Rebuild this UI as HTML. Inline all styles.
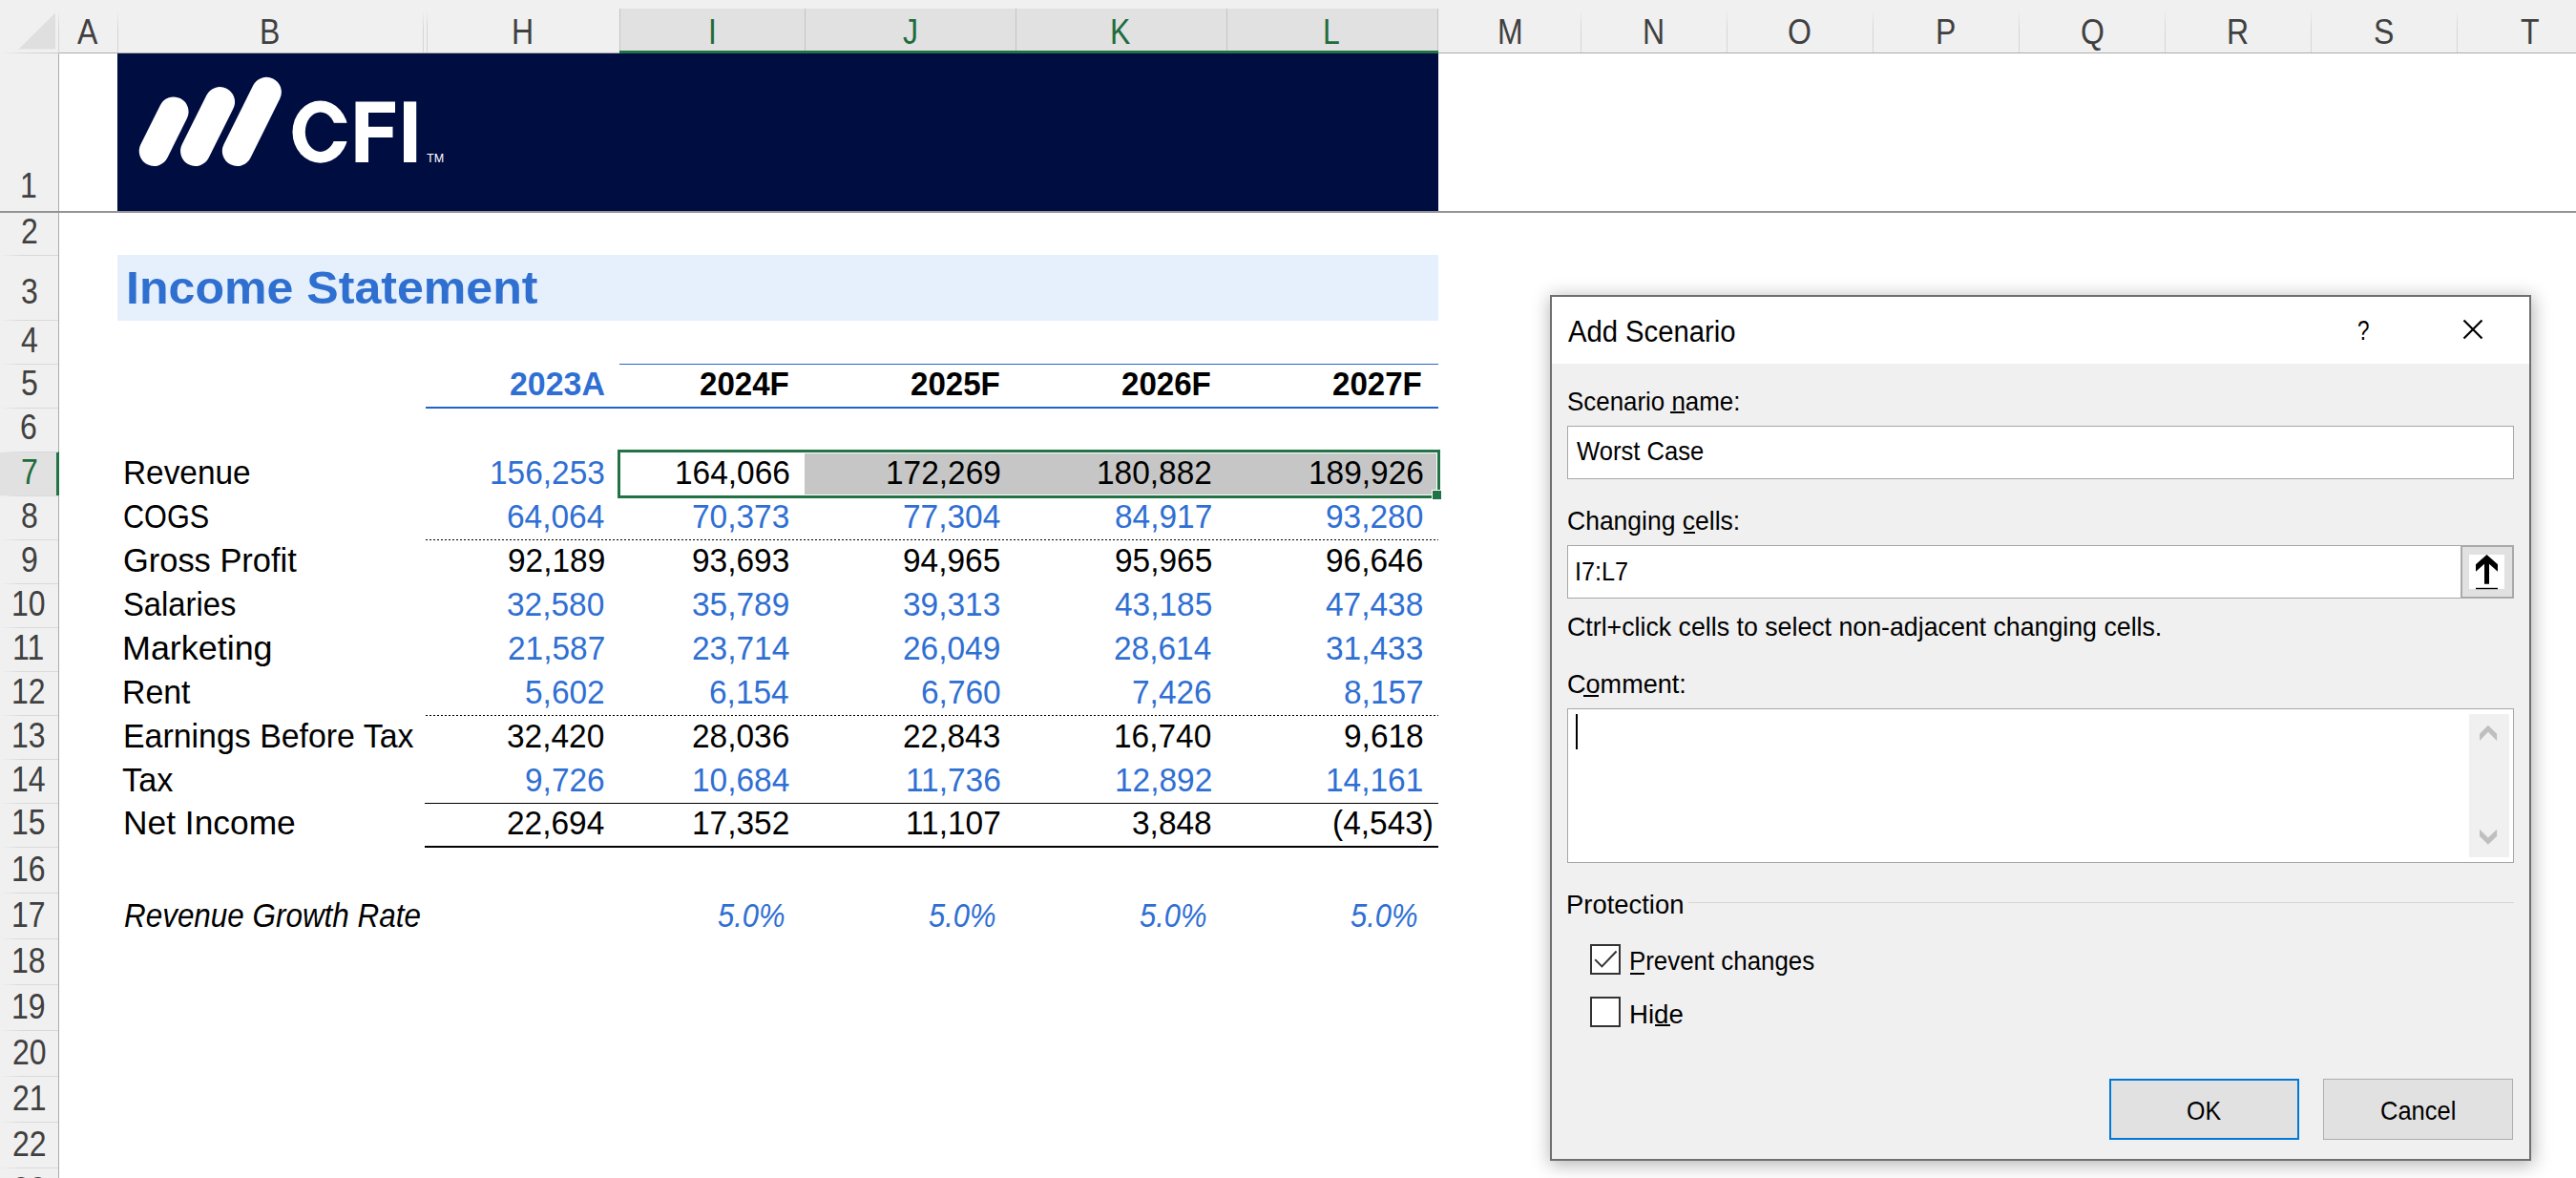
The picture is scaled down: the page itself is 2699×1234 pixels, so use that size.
<!DOCTYPE html>
<html><head><meta charset="utf-8"><style>
html,body{margin:0;padding:0;}
body{width:2699px;height:1234px;position:relative;overflow:hidden;background:#fff;font-family:"Liberation Sans",sans-serif;}
.t{position:absolute;white-space:pre;transform-origin:0 0;}
.r{position:absolute;}
</style></head><body>
<div class="r" style="left:0px;top:0px;width:2699px;height:55px;background:#f0f0f0;"></div>
<div class="r" style="left:62px;top:55px;width:2637px;height:1px;background:#ababab;"></div>
<div class="r" style="left:0px;top:55px;width:62px;height:1px;background:linear-gradient(90deg,#f0f0f0 0,#d6d6d6 30px,#c8c8c8 100%);"></div>
<div class="r" style="left:0px;top:56px;width:61px;height:1178px;background:#f0f0f0;"></div>
<div class="r" style="left:61px;top:56px;width:1px;height:1178px;background:#ababab;"></div>
<div class="r" style="left:61px;top:10px;width:1px;height:46px;background:linear-gradient(180deg,#f0f0f0 0,#d6d6d6 20px,#d6d6d6 100%);"></div>
<svg class="r" style="left:0;top:0" width="62" height="56"><polygon points="19.5,51.5 58,13.5 58,51.5" fill="#dfdfdf"/></svg>
<div class="r" style="left:649px;top:9px;width:858px;height:44px;background:#e1e1e1;"></div>
<div class="r" style="left:649px;top:53px;width:858px;height:3px;background:#217346;"></div>
<div class="r" style="left:649px;top:9px;width:1px;height:44px;background:#c4c4c4;"></div>
<div class="r" style="left:843px;top:9px;width:1px;height:44px;background:#c4c4c4;"></div>
<div class="r" style="left:1064px;top:9px;width:1px;height:44px;background:#c4c4c4;"></div>
<div class="r" style="left:1285px;top:9px;width:1px;height:44px;background:#c4c4c4;"></div>
<div class="r" style="left:1506px;top:9px;width:1px;height:44px;background:#c4c4c4;"></div>
<div class="r" style="left:123px;top:10px;width:1px;height:45px;background:linear-gradient(180deg,#f0f0f0 0,#d6d6d6 20px,#d6d6d6 100%);"></div>
<div class="r" style="left:443px;top:10px;width:1px;height:45px;background:linear-gradient(180deg,#f0f0f0 0,#d6d6d6 20px,#d6d6d6 100%);"></div>
<div class="r" style="left:447px;top:10px;width:1px;height:45px;background:linear-gradient(180deg,#f0f0f0 0,#d6d6d6 20px,#d6d6d6 100%);"></div>
<div class="r" style="left:1656px;top:10px;width:1px;height:45px;background:linear-gradient(180deg,#f0f0f0 0,#d6d6d6 20px,#d6d6d6 100%);"></div>
<div class="r" style="left:1809px;top:10px;width:1px;height:45px;background:linear-gradient(180deg,#f0f0f0 0,#d6d6d6 20px,#d6d6d6 100%);"></div>
<div class="r" style="left:1962px;top:10px;width:1px;height:45px;background:linear-gradient(180deg,#f0f0f0 0,#d6d6d6 20px,#d6d6d6 100%);"></div>
<div class="r" style="left:2115px;top:10px;width:1px;height:45px;background:linear-gradient(180deg,#f0f0f0 0,#d6d6d6 20px,#d6d6d6 100%);"></div>
<div class="r" style="left:2268px;top:10px;width:1px;height:45px;background:linear-gradient(180deg,#f0f0f0 0,#d6d6d6 20px,#d6d6d6 100%);"></div>
<div class="r" style="left:2421px;top:10px;width:1px;height:45px;background:linear-gradient(180deg,#f0f0f0 0,#d6d6d6 20px,#d6d6d6 100%);"></div>
<div class="r" style="left:2574px;top:10px;width:1px;height:45px;background:linear-gradient(180deg,#f0f0f0 0,#d6d6d6 20px,#d6d6d6 100%);"></div>
<div class="t" style="left:81.35px;top:15px;font-size:37.68px;line-height:37.68px;color:#404040;transform:scaleX(0.8500);">A</div>
<div class="t" style="left:271.87px;top:15px;font-size:37.68px;line-height:37.68px;color:#404040;transform:scaleX(0.8500);">B</div>
<div class="t" style="left:536.43px;top:15px;font-size:37.68px;line-height:37.68px;color:#404040;transform:scaleX(0.8500);">H</div>
<div class="t" style="left:741.56px;top:15px;font-size:37.68px;line-height:37.68px;color:#1e6b3c;transform:scaleX(0.8500);">I</div>
<div class="t" style="left:946.41px;top:15px;font-size:37.68px;line-height:37.68px;color:#1e6b3c;transform:scaleX(0.8500);">J</div>
<div class="t" style="left:1162.69px;top:15px;font-size:37.68px;line-height:37.68px;color:#1e6b3c;transform:scaleX(0.8500);">K</div>
<div class="t" style="left:1386.31px;top:15px;font-size:37.68px;line-height:37.68px;color:#1e6b3c;transform:scaleX(0.8500);">L</div>
<div class="t" style="left:1568.67px;top:15px;font-size:37.68px;line-height:37.68px;color:#404040;transform:scaleX(0.8500);">M</div>
<div class="t" style="left:1721.43px;top:15px;font-size:37.68px;line-height:37.68px;color:#404040;transform:scaleX(0.8500);">N</div>
<div class="t" style="left:1873.09px;top:15px;font-size:37.68px;line-height:37.68px;color:#404040;transform:scaleX(0.8500);">O</div>
<div class="t" style="left:2027.67px;top:15px;font-size:37.68px;line-height:37.68px;color:#404040;transform:scaleX(0.8500);">P</div>
<div class="t" style="left:2179.59px;top:15px;font-size:37.68px;line-height:37.68px;color:#404040;transform:scaleX(0.8500);">Q</div>
<div class="t" style="left:2332.87px;top:15px;font-size:37.68px;line-height:37.68px;color:#404040;transform:scaleX(0.8500);">R</div>
<div class="t" style="left:2487.31px;top:15px;font-size:37.68px;line-height:37.68px;color:#404040;transform:scaleX(0.8500);">S</div>
<div class="t" style="left:2641.23px;top:15px;font-size:37.68px;line-height:37.68px;color:#404040;transform:scaleX(0.8500);">T</div>
<div class="r" style="left:0px;top:473px;width:59px;height:46px;background:#e1e1e1;"></div>
<div class="r" style="left:59px;top:473px;width:3px;height:46px;background:#217346;"></div>
<div class="r" style="left:0px;top:267px;width:61px;height:1px;background:linear-gradient(90deg,#f0f0f0 0,#d9d9d9 22px,#d9d9d9 100%);"></div>
<div class="r" style="left:0px;top:335px;width:61px;height:1px;background:linear-gradient(90deg,#f0f0f0 0,#d9d9d9 22px,#d9d9d9 100%);"></div>
<div class="r" style="left:0px;top:381px;width:61px;height:1px;background:linear-gradient(90deg,#f0f0f0 0,#d9d9d9 22px,#d9d9d9 100%);"></div>
<div class="r" style="left:0px;top:427px;width:61px;height:1px;background:linear-gradient(90deg,#f0f0f0 0,#d9d9d9 22px,#d9d9d9 100%);"></div>
<div class="r" style="left:0px;top:473px;width:61px;height:1px;background:linear-gradient(90deg,#f0f0f0 0,#d9d9d9 22px,#d9d9d9 100%);"></div>
<div class="r" style="left:0px;top:519px;width:61px;height:1px;background:linear-gradient(90deg,#f0f0f0 0,#d9d9d9 22px,#d9d9d9 100%);"></div>
<div class="r" style="left:0px;top:565px;width:61px;height:1px;background:linear-gradient(90deg,#f0f0f0 0,#d9d9d9 22px,#d9d9d9 100%);"></div>
<div class="r" style="left:0px;top:611px;width:61px;height:1px;background:linear-gradient(90deg,#f0f0f0 0,#d9d9d9 22px,#d9d9d9 100%);"></div>
<div class="r" style="left:0px;top:657px;width:61px;height:1px;background:linear-gradient(90deg,#f0f0f0 0,#d9d9d9 22px,#d9d9d9 100%);"></div>
<div class="r" style="left:0px;top:703px;width:61px;height:1px;background:linear-gradient(90deg,#f0f0f0 0,#d9d9d9 22px,#d9d9d9 100%);"></div>
<div class="r" style="left:0px;top:749px;width:61px;height:1px;background:linear-gradient(90deg,#f0f0f0 0,#d9d9d9 22px,#d9d9d9 100%);"></div>
<div class="r" style="left:0px;top:795px;width:61px;height:1px;background:linear-gradient(90deg,#f0f0f0 0,#d9d9d9 22px,#d9d9d9 100%);"></div>
<div class="r" style="left:0px;top:841px;width:61px;height:1px;background:linear-gradient(90deg,#f0f0f0 0,#d9d9d9 22px,#d9d9d9 100%);"></div>
<div class="r" style="left:0px;top:887px;width:61px;height:1px;background:linear-gradient(90deg,#f0f0f0 0,#d9d9d9 22px,#d9d9d9 100%);"></div>
<div class="r" style="left:0px;top:935px;width:61px;height:1px;background:linear-gradient(90deg,#f0f0f0 0,#d9d9d9 22px,#d9d9d9 100%);"></div>
<div class="r" style="left:0px;top:983px;width:61px;height:1px;background:linear-gradient(90deg,#f0f0f0 0,#d9d9d9 22px,#d9d9d9 100%);"></div>
<div class="r" style="left:0px;top:1031px;width:61px;height:1px;background:linear-gradient(90deg,#f0f0f0 0,#d9d9d9 22px,#d9d9d9 100%);"></div>
<div class="r" style="left:0px;top:1079px;width:61px;height:1px;background:linear-gradient(90deg,#f0f0f0 0,#d9d9d9 22px,#d9d9d9 100%);"></div>
<div class="r" style="left:0px;top:1127px;width:61px;height:1px;background:linear-gradient(90deg,#f0f0f0 0,#d9d9d9 22px,#d9d9d9 100%);"></div>
<div class="r" style="left:0px;top:1175px;width:61px;height:1px;background:linear-gradient(90deg,#f0f0f0 0,#d9d9d9 22px,#d9d9d9 100%);"></div>
<div class="r" style="left:0px;top:1223px;width:61px;height:1px;background:linear-gradient(90deg,#f0f0f0 0,#d9d9d9 22px,#d9d9d9 100%);"></div>
<div class="r" style="left:0px;top:221px;width:2699px;height:2px;background:#949494;"></div>
<div class="t" style="left:21.17px;top:176px;font-size:37.68px;line-height:37.68px;color:#404040;transform:scaleX(0.8500);">1</div>
<div class="t" style="left:21.57px;top:224px;font-size:37.68px;line-height:37.68px;color:#404040;transform:scaleX(0.8500);">2</div>
<div class="t" style="left:21.69px;top:287px;font-size:37.68px;line-height:37.68px;color:#404040;transform:scaleX(0.8500);">3</div>
<div class="t" style="left:21.69px;top:338px;font-size:37.68px;line-height:37.68px;color:#404040;transform:scaleX(0.8500);">4</div>
<div class="t" style="left:21.61px;top:383px;font-size:37.68px;line-height:37.68px;color:#404040;transform:scaleX(0.8500);">5</div>
<div class="t" style="left:21.49px;top:429px;font-size:37.68px;line-height:37.68px;color:#404040;transform:scaleX(0.8500);">6</div>
<div class="t" style="left:21.57px;top:476px;font-size:37.68px;line-height:37.68px;color:#1e6b3c;transform:scaleX(0.8500);">7</div>
<div class="t" style="left:21.57px;top:522px;font-size:37.68px;line-height:37.68px;color:#404040;transform:scaleX(0.8500);">8</div>
<div class="t" style="left:21.61px;top:568px;font-size:37.68px;line-height:37.68px;color:#404040;transform:scaleX(0.8500);">9</div>
<div class="t" style="left:12.12px;top:614px;font-size:37.68px;line-height:37.68px;color:#404040;transform:scaleX(0.8500);">10</div>
<div class="t" style="left:13.44px;top:660px;font-size:37.68px;line-height:37.68px;color:#404040;transform:scaleX(0.8500);">11</div>
<div class="t" style="left:12.28px;top:706px;font-size:37.68px;line-height:37.68px;color:#404040;transform:scaleX(0.8500);">12</div>
<div class="t" style="left:12.20px;top:752px;font-size:37.68px;line-height:37.68px;color:#404040;transform:scaleX(0.8500);">13</div>
<div class="t" style="left:11.96px;top:798px;font-size:37.68px;line-height:37.68px;color:#404040;transform:scaleX(0.8500);">14</div>
<div class="t" style="left:12.16px;top:843px;font-size:37.68px;line-height:37.68px;color:#404040;transform:scaleX(0.8500);">15</div>
<div class="t" style="left:12.20px;top:892px;font-size:37.68px;line-height:37.68px;color:#404040;transform:scaleX(0.8500);">16</div>
<div class="t" style="left:12.28px;top:940px;font-size:37.68px;line-height:37.68px;color:#404040;transform:scaleX(0.8500);">17</div>
<div class="t" style="left:12.16px;top:988px;font-size:37.68px;line-height:37.68px;color:#404040;transform:scaleX(0.8500);">18</div>
<div class="t" style="left:12.24px;top:1036px;font-size:37.68px;line-height:37.68px;color:#404040;transform:scaleX(0.8500);">19</div>
<div class="t" style="left:12.52px;top:1084px;font-size:37.68px;line-height:37.68px;color:#404040;transform:scaleX(0.8500);">20</div>
<div class="t" style="left:12.68px;top:1132px;font-size:37.68px;line-height:37.68px;color:#404040;transform:scaleX(0.8500);">21</div>
<div class="t" style="left:12.68px;top:1180px;font-size:37.68px;line-height:37.68px;color:#404040;transform:scaleX(0.8500);">22</div>
<div class="t" style="left:12.60px;top:1228px;font-size:37.68px;line-height:37.68px;color:#404040;transform:scaleX(0.8500);">23</div>
<div class="r" style="left:123px;top:56px;width:1384px;height:165px;background:#000d41;"></div>
<svg class="r" style="left:0;top:0" width="2699" height="240"><line x1="161.4" y1="158.3" x2="181.9" y2="117.1" stroke="#fff" stroke-width="31.3" stroke-linecap="round"/><line x1="204.7" y1="158.3" x2="230.4" y2="106.8" stroke="#fff" stroke-width="31.3" stroke-linecap="round"/><line x1="248.5" y1="158.3" x2="279.2" y2="96.5" stroke="#fff" stroke-width="31.3" stroke-linecap="round"/><ellipse cx="335.7" cy="138.2" rx="29.2" ry="32.6" fill="#fff"/><ellipse cx="335.7" cy="138.2" rx="15.9" ry="20.7" fill="#000d41"/><rect x="336" y="128.8" width="40" height="19.2" fill="#000d41"/><path d="M372.5 106.4H414V117.9H386V132.7H411.5V143.9H386V170H372.5Z" fill="#fff"/><rect x="423" y="106.4" width="13.2" height="63.6" fill="#fff"/></svg>
<div class="t" style="left:446.95px;top:159px;font-size:13.04px;line-height:13.04px;color:#fff;transform:scaleX(0.9651);">TM</div>
<div class="r" style="left:123px;top:267px;width:1384px;height:69px;background:#e5f0fc;"></div>
<div class="t" style="left:131.74px;top:277px;font-size:48.99px;line-height:48.99px;font-weight:bold;color:#2f6fd0;transform:scaleX(1.0227);">Income Statement</div>
<div class="r" style="left:649px;top:381px;width:858px;height:1px;background:#2a64c8;"></div>
<div class="r" style="left:446px;top:426px;width:1061px;height:2px;background:#2162cc;"></div>
<div class="t" style="left:533.90px;top:385px;font-size:35.51px;line-height:35.51px;font-weight:bold;color:#2f6fd3;transform:scaleX(0.9550);">2023A</div>
<div class="t" style="left:733.12px;top:385px;font-size:35.51px;line-height:35.51px;font-weight:bold;color:#000;transform:scaleX(0.9322);">2024F</div>
<div class="t" style="left:953.72px;top:385px;font-size:35.51px;line-height:35.51px;font-weight:bold;color:#000;transform:scaleX(0.9322);">2025F</div>
<div class="t" style="left:1174.72px;top:385px;font-size:35.51px;line-height:35.51px;font-weight:bold;color:#000;transform:scaleX(0.9322);">2026F</div>
<div class="t" style="left:1395.72px;top:385px;font-size:35.51px;line-height:35.51px;font-weight:bold;color:#000;transform:scaleX(0.9322);">2027F</div>
<div class="r" style="left:843px;top:475px;width:662px;height:43px;background:#c6c6c6;"></div>
<div class="t" style="left:129.13px;top:478px;font-size:34.78px;line-height:34.78px;color:#000;transform:scaleX(0.9596);">Revenue</div>
<div class="t" style="left:513.04px;top:478px;font-size:34.78px;line-height:34.78px;color:#2f6fd3;transform:scaleX(0.9620);">156,253</div>
<div class="t" style="left:706.54px;top:478px;font-size:34.78px;line-height:34.78px;color:#000;transform:scaleX(0.9620);">164,066</div>
<div class="t" style="left:927.63px;top:478px;font-size:34.78px;line-height:34.78px;color:#000;transform:scaleX(0.9620);">172,269</div>
<div class="t" style="left:1149.21px;top:478px;font-size:34.78px;line-height:34.78px;color:#000;transform:scaleX(0.9620);">180,882</div>
<div class="t" style="left:1370.54px;top:478px;font-size:34.78px;line-height:34.78px;color:#000;transform:scaleX(0.9620);">189,926</div>
<div class="t" style="left:128.87px;top:524px;font-size:34.78px;line-height:34.78px;color:#000;transform:scaleX(0.8807);">COGS</div>
<div class="t" style="left:531.11px;top:524px;font-size:34.78px;line-height:34.78px;color:#2f6fd3;transform:scaleX(0.9620);">64,064</div>
<div class="t" style="left:725.12px;top:524px;font-size:34.78px;line-height:34.78px;color:#2f6fd3;transform:scaleX(0.9620);">70,373</div>
<div class="t" style="left:945.61px;top:524px;font-size:34.78px;line-height:34.78px;color:#2f6fd3;transform:scaleX(0.9620);">77,304</div>
<div class="t" style="left:1167.78px;top:524px;font-size:34.78px;line-height:34.78px;color:#2f6fd3;transform:scaleX(0.9620);">84,917</div>
<div class="t" style="left:1388.95px;top:524px;font-size:34.78px;line-height:34.78px;color:#2f6fd3;transform:scaleX(0.9620);">93,280</div>
<div class="t" style="left:128.68px;top:570px;font-size:34.78px;line-height:34.78px;color:#000;transform:scaleX(0.9904);">Gross Profit</div>
<div class="t" style="left:531.70px;top:570px;font-size:34.78px;line-height:34.78px;color:#000;transform:scaleX(0.9620);">92,189</div>
<div class="t" style="left:725.12px;top:570px;font-size:34.78px;line-height:34.78px;color:#000;transform:scaleX(0.9620);">93,693</div>
<div class="t" style="left:946.03px;top:570px;font-size:34.78px;line-height:34.78px;color:#000;transform:scaleX(0.9620);">94,965</div>
<div class="t" style="left:1167.53px;top:570px;font-size:34.78px;line-height:34.78px;color:#000;transform:scaleX(0.9620);">95,965</div>
<div class="t" style="left:1389.12px;top:570px;font-size:34.78px;line-height:34.78px;color:#000;transform:scaleX(0.9620);">96,646</div>
<div class="t" style="left:128.62px;top:616px;font-size:34.78px;line-height:34.78px;color:#000;transform:scaleX(0.9425);">Salaries</div>
<div class="t" style="left:531.45px;top:616px;font-size:34.78px;line-height:34.78px;color:#2f6fd3;transform:scaleX(0.9620);">32,580</div>
<div class="t" style="left:725.20px;top:616px;font-size:34.78px;line-height:34.78px;color:#2f6fd3;transform:scaleX(0.9620);">35,789</div>
<div class="t" style="left:946.12px;top:616px;font-size:34.78px;line-height:34.78px;color:#2f6fd3;transform:scaleX(0.9620);">39,313</div>
<div class="t" style="left:1167.53px;top:616px;font-size:34.78px;line-height:34.78px;color:#2f6fd3;transform:scaleX(0.9620);">43,185</div>
<div class="t" style="left:1389.03px;top:616px;font-size:34.78px;line-height:34.78px;color:#2f6fd3;transform:scaleX(0.9620);">47,438</div>
<div class="t" style="left:128.23px;top:662px;font-size:34.78px;line-height:34.78px;color:#000;transform:scaleX(1.0322);">Marketing</div>
<div class="t" style="left:531.78px;top:662px;font-size:34.78px;line-height:34.78px;color:#2f6fd3;transform:scaleX(0.9620);">21,587</div>
<div class="t" style="left:724.61px;top:662px;font-size:34.78px;line-height:34.78px;color:#2f6fd3;transform:scaleX(0.9620);">23,714</div>
<div class="t" style="left:946.20px;top:662px;font-size:34.78px;line-height:34.78px;color:#2f6fd3;transform:scaleX(0.9620);">26,049</div>
<div class="t" style="left:1167.11px;top:662px;font-size:34.78px;line-height:34.78px;color:#2f6fd3;transform:scaleX(0.9620);">28,614</div>
<div class="t" style="left:1389.12px;top:662px;font-size:34.78px;line-height:34.78px;color:#2f6fd3;transform:scaleX(0.9620);">31,433</div>
<div class="t" style="left:128.39px;top:708px;font-size:34.78px;line-height:34.78px;color:#000;transform:scaleX(0.9727);">Rent</div>
<div class="t" style="left:550.35px;top:708px;font-size:34.78px;line-height:34.78px;color:#2f6fd3;transform:scaleX(0.9620);">5,602</div>
<div class="t" style="left:743.18px;top:708px;font-size:34.78px;line-height:34.78px;color:#2f6fd3;transform:scaleX(0.9620);">6,154</div>
<div class="t" style="left:964.52px;top:708px;font-size:34.78px;line-height:34.78px;color:#2f6fd3;transform:scaleX(0.9620);">6,760</div>
<div class="t" style="left:1186.19px;top:708px;font-size:34.78px;line-height:34.78px;color:#2f6fd3;transform:scaleX(0.9620);">7,426</div>
<div class="t" style="left:1407.85px;top:708px;font-size:34.78px;line-height:34.78px;color:#2f6fd3;transform:scaleX(0.9620);">8,157</div>
<div class="t" style="left:128.79px;top:754px;font-size:34.78px;line-height:34.78px;color:#000;transform:scaleX(0.9745);">Earnings Before Tax</div>
<div class="t" style="left:531.45px;top:754px;font-size:34.78px;line-height:34.78px;color:#000;transform:scaleX(0.9620);">32,420</div>
<div class="t" style="left:725.12px;top:754px;font-size:34.78px;line-height:34.78px;color:#000;transform:scaleX(0.9620);">28,036</div>
<div class="t" style="left:946.12px;top:754px;font-size:34.78px;line-height:34.78px;color:#000;transform:scaleX(0.9620);">22,843</div>
<div class="t" style="left:1167.45px;top:754px;font-size:34.78px;line-height:34.78px;color:#000;transform:scaleX(0.9620);">16,740</div>
<div class="t" style="left:1407.60px;top:754px;font-size:34.78px;line-height:34.78px;color:#000;transform:scaleX(0.9620);">9,618</div>
<div class="t" style="left:128.31px;top:800px;font-size:34.78px;line-height:34.78px;color:#000;transform:scaleX(0.9860);">Tax</div>
<div class="t" style="left:550.19px;top:800px;font-size:34.78px;line-height:34.78px;color:#2f6fd3;transform:scaleX(0.9620);">9,726</div>
<div class="t" style="left:724.61px;top:800px;font-size:34.78px;line-height:34.78px;color:#2f6fd3;transform:scaleX(0.9620);">10,684</div>
<div class="t" style="left:948.63px;top:800px;font-size:34.78px;line-height:34.78px;color:#2f6fd3;transform:scaleX(0.9620);">11,736</div>
<div class="t" style="left:1167.78px;top:800px;font-size:34.78px;line-height:34.78px;color:#2f6fd3;transform:scaleX(0.9620);">12,892</div>
<div class="t" style="left:1389.28px;top:800px;font-size:34.78px;line-height:34.78px;color:#2f6fd3;transform:scaleX(0.9620);">14,161</div>
<div class="t" style="left:128.67px;top:845px;font-size:34.78px;line-height:34.78px;color:#000;transform:scaleX(1.0169);">Net Income</div>
<div class="t" style="left:531.11px;top:845px;font-size:34.78px;line-height:34.78px;color:#000;transform:scaleX(0.9620);">22,694</div>
<div class="t" style="left:725.28px;top:845px;font-size:34.78px;line-height:34.78px;color:#000;transform:scaleX(0.9620);">17,352</div>
<div class="t" style="left:948.79px;top:845px;font-size:34.78px;line-height:34.78px;color:#000;transform:scaleX(0.9620);">11,107</div>
<div class="t" style="left:1186.10px;top:845px;font-size:34.78px;line-height:34.78px;color:#000;transform:scaleX(0.9620);">3,848</div>
<div class="t" style="left:1396.22px;top:845px;font-size:34.78px;line-height:34.78px;color:#000;transform:scaleX(0.9620);">(4,543)</div>
<div class="t" style="left:130.06px;top:942px;font-size:34.78px;line-height:34.78px;font-style:italic;color:#000;transform:scaleX(0.9040);">Revenue Growth Rate</div>
<div class="t" style="left:752.03px;top:942px;font-size:34.78px;line-height:34.78px;font-style:italic;color:#2f6fd3;transform:scaleX(0.8900);">5.0%</div>
<div class="t" style="left:972.63px;top:942px;font-size:34.78px;line-height:34.78px;font-style:italic;color:#2f6fd3;transform:scaleX(0.8900);">5.0%</div>
<div class="t" style="left:1194.03px;top:942px;font-size:34.78px;line-height:34.78px;font-style:italic;color:#2f6fd3;transform:scaleX(0.8900);">5.0%</div>
<div class="t" style="left:1414.93px;top:942px;font-size:34.78px;line-height:34.78px;font-style:italic;color:#2f6fd3;transform:scaleX(0.8900);">5.0%</div>
<div class="r" style="left:446px;top:565px;width:1061px;height:1px;background:repeating-linear-gradient(90deg,#000 0 2px,transparent 2px 4px);"></div>
<div class="r" style="left:446px;top:749px;width:1061px;height:1px;background:repeating-linear-gradient(90deg,#000 0 2px,transparent 2px 4px);"></div>
<div class="r" style="left:445px;top:841px;width:1062px;height:1px;background:#000;"></div>
<div class="r" style="left:445px;top:886px;width:1062px;height:2px;background:#000;"></div>
<div class="r" style="left:647px;top:471px;width:856px;height:45px;border:3px solid #217346"></div>
<div class="r" style="left:1500px;top:513px;width:11px;height:11px;background:#fff;"></div>
<div class="r" style="left:1501px;top:514px;width:9px;height:9px;background:#217346;"></div>
<div class="r" style="left:1624px;top:309px;width:1024px;height:903px;border:2px solid #6f6f6f;background:#f0f0f0;box-shadow:1px 3px 18px 1px rgba(0,0,0,0.30)"></div>
<div class="r" style="left:1626px;top:311px;width:1024px;height:70px;background:#fff;"></div>
<div class="t" style="left:1642.80px;top:332px;font-size:31.88px;line-height:31.88px;color:#000;transform:scaleX(0.9168);">Add Scenario</div>
<div class="t" style="left:2469.90px;top:331px;font-size:29.71px;line-height:29.71px;color:#000;transform:scaleX(0.7573);">?</div>
<svg class="r" style="left:2578px;top:332px" width="26" height="26"><path d="M3.5 3.5L22.5 22.5M22.5 3.5L3.5 22.5" stroke="#000" stroke-width="2.2"/></svg>
<div class="t" style="left:1641.63px;top:407px;font-size:27.83px;line-height:27.83px;color:#000;transform:scaleX(0.9311);">Scenario name:</div>
<div class="r" style="left:1642px;top:446px;width:992px;height:56px;background:#fff;box-sizing:border-box;border:1px solid #a7a7a7"></div>
<div class="t" style="left:1651.64px;top:459px;font-size:27.83px;line-height:27.83px;color:#000;transform:scaleX(0.9193);">Worst Case</div>
<div class="t" style="left:1641.57px;top:532px;font-size:27.83px;line-height:27.83px;color:#000;transform:scaleX(0.9524);">Changing cells:</div>
<div class="r" style="left:1642px;top:571px;width:992px;height:56px;background:#fff;box-sizing:border-box;border:1px solid #a7a7a7"></div>
<div class="t" style="left:1650.03px;top:585px;font-size:27.83px;line-height:27.83px;color:#000;transform:scaleX(0.9066);">I7:L7</div>
<div class="t" style="left:1641.66px;top:643px;font-size:27.83px;line-height:27.83px;color:#000;transform:scaleX(0.9606);">Ctrl+click cells to select non-adjacent changing cells.</div>
<div class="t" style="left:1641.65px;top:703px;font-size:27.83px;line-height:27.83px;color:#000;transform:scaleX(0.9723);">Comment:</div>
<div class="r" style="left:1642px;top:742px;width:992px;height:162px;background:#fff;box-sizing:border-box;border:1px solid #a7a7a7"></div>
<div class="t" style="left:1641.21px;top:934px;font-size:27.83px;line-height:27.83px;color:#000;transform:scaleX(0.9850);">Protection</div>
<div class="r" style="left:1769px;top:945px;width:865px;height:1px;background:#d5d5d5;"></div>
<div class="r" style="left:1666px;top:989px;width:32px;height:32px;background:#fff;box-sizing:border-box;border:2px solid #333"></div>
<div class="t" style="left:1707.43px;top:993px;font-size:27.83px;line-height:27.83px;color:#000;transform:scaleX(0.9298);">Prevent changes</div>
<div class="r" style="left:1666px;top:1044px;width:32px;height:32px;background:#fff;box-sizing:border-box;border:2px solid #333"></div>
<div class="t" style="left:1707.29px;top:1049px;font-size:27.83px;line-height:27.83px;color:#000;transform:scaleX(0.9930);">Hide</div>
<svg class="r" style="left:1666px;top:989px" width="32" height="32"><path d="M5.2 16.1L12.4 23.4L27.6 7.5" fill="none" stroke="#333" stroke-width="2"/></svg>
<div class="r" style="left:1750px;top:431px;width:15px;height:2px;background:#000;"></div>
<div class="r" style="left:1764px;top:557px;width:12px;height:2px;background:#000;"></div>
<div class="r" style="left:1659px;top:728px;width:16px;height:2px;background:#000;"></div>
<div class="r" style="left:1708px;top:1019px;width:15px;height:2px;background:#000;"></div>
<div class="r" style="left:1734px;top:1073px;width:16px;height:2px;background:#000;"></div>
<div class="r" style="left:1651px;top:748px;width:2px;height:37px;background:#000;"></div>
<div class="r" style="left:2587px;top:748px;width:42px;height:150px;background:#f0f0f0;"></div>
<svg class="r" style="left:2590px;top:752px" width="36" height="140"><path d="M16.9 7.8L26.1 16.7V24L16.9 14.8L8 24V16.7Z" fill="#bfbfbf"/><path d="M16.9 132.8L26.1 124V116.7L16.9 125.6L8 116.7V124Z" fill="#bfbfbf"/></svg>
<div class="r" style="left:2578px;top:571px;width:56px;height:56px;background:#e1e1e1;box-sizing:border-box;border:2px solid #a9a9a9"></div>
<div class="r" style="left:2587px;top:581px;width:37px;height:36px;background:#fff;"></div>
<svg class="r" style="left:2587px;top:581px" width="37" height="37"><path d="M18.5 0L30 10.2V17.8L21 9.7V30.8H16V9.7L7 17.8V10.2Z" fill="#000"/><rect x="7" y="34.8" width="23" height="1.4" fill="#000"/></svg>
<div class="r" style="left:2210px;top:1130px;width:199px;height:64px;background:#e1e1e1;box-sizing:border-box;border:2px solid #0078d7"></div>
<div class="t" style="left:2290.73px;top:1149px;font-size:28.41px;line-height:28.41px;color:#000;transform:scaleX(0.8788);">OK</div>
<div class="r" style="left:2434px;top:1130px;width:199px;height:64px;background:#e1e1e1;box-sizing:border-box;border:1px solid #adadad"></div>
<div class="t" style="left:2493.63px;top:1149px;font-size:28.41px;line-height:28.41px;color:#000;transform:scaleX(0.8973);">Cancel</div>
</body></html>
